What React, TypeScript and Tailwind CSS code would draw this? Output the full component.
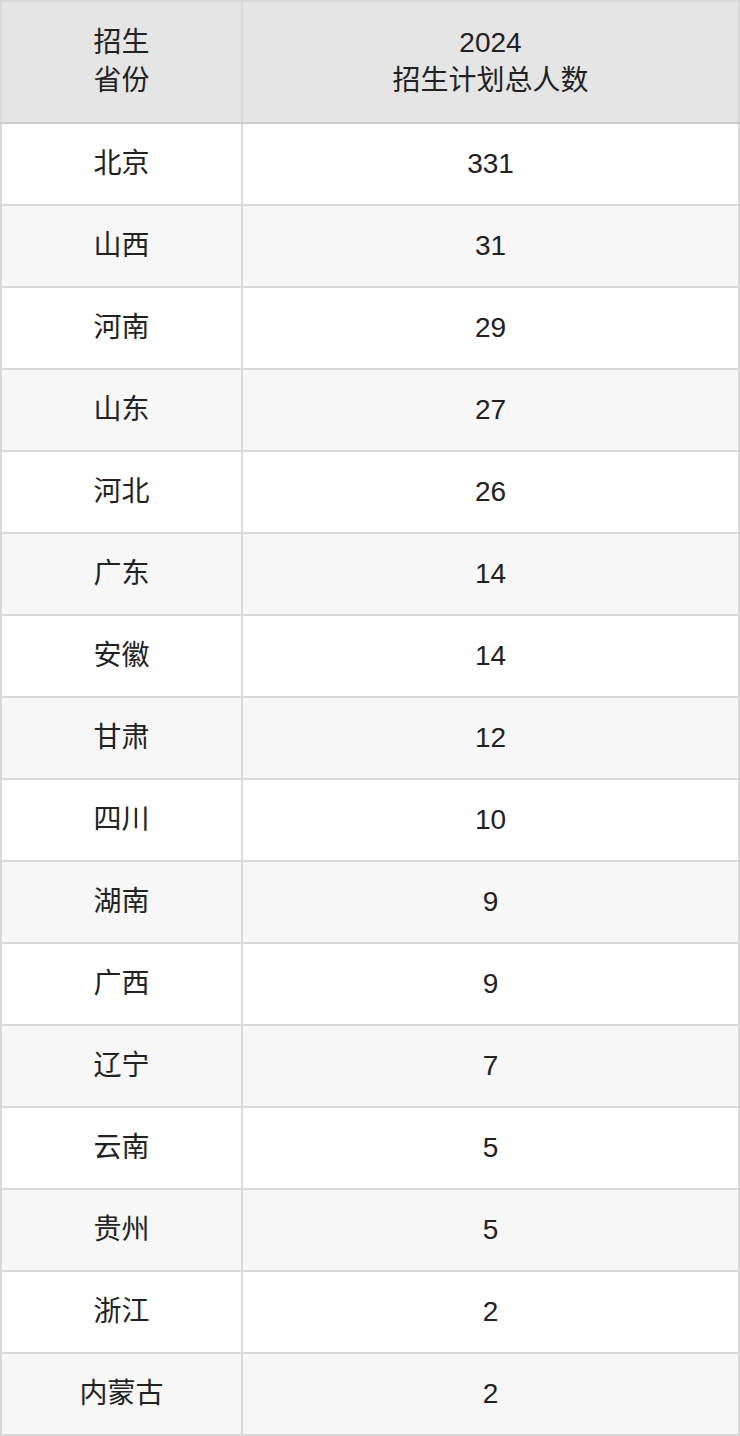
const rows: [string, string][] = [
  ["北京", "331"],
  ["山西", "31"],
  ["河南", "29"],
  ["山东", "27"],
  ["河北", "26"],
  ["广东", "14"],
  ["安徽", "14"],
  ["甘肃", "12"],
  ["四川", "10"],
  ["湖南", "9"],
  ["广西", "9"],
  ["辽宁", "7"],
  ["云南", "5"],
  ["贵州", "5"],
  ["浙江", "2"],
  ["内蒙古", "2"],
];

export default function App() {
  return (
    <div className="w-[740px] bg-white font-['Liberation_Sans','Noto_Sans_CJK_SC',sans-serif] text-[28px] text-[#222]">
      <table className="w-full border-collapse border-2 border-[#d9d9d9] table-fixed">
        <colgroup>
          <col className="w-[241px]" />
          <col />
        </colgroup>
        <thead>
          <tr className="h-[122px] bg-[#e5e5e5] border-b-2 border-[#cccccc]">
            <th className="border-2 border-[#d9d9d9] border-b-[#cccccc] font-normal leading-[38px] text-center">
              招生
              <br />
              省份
            </th>
            <th className="border-2 border-[#d9d9d9] border-b-[#cccccc] font-normal leading-[38px] text-center">
              2024
              <br />
              招生计划总人数
            </th>
          </tr>
        </thead>
        <tbody>
          {rows.map(([p, n], i) => (
            <tr key={p} className={`h-[82px] ${i % 2 === 0 ? "bg-white" : "bg-[#f7f7f7]"}`}>
              <td className="border-2 border-[#d9d9d9] text-center">{p}</td>
              <td className="border-2 border-[#d9d9d9] text-center">{n}</td>
            </tr>
          ))}
        </tbody>
      </table>
    </div>
  );
}
